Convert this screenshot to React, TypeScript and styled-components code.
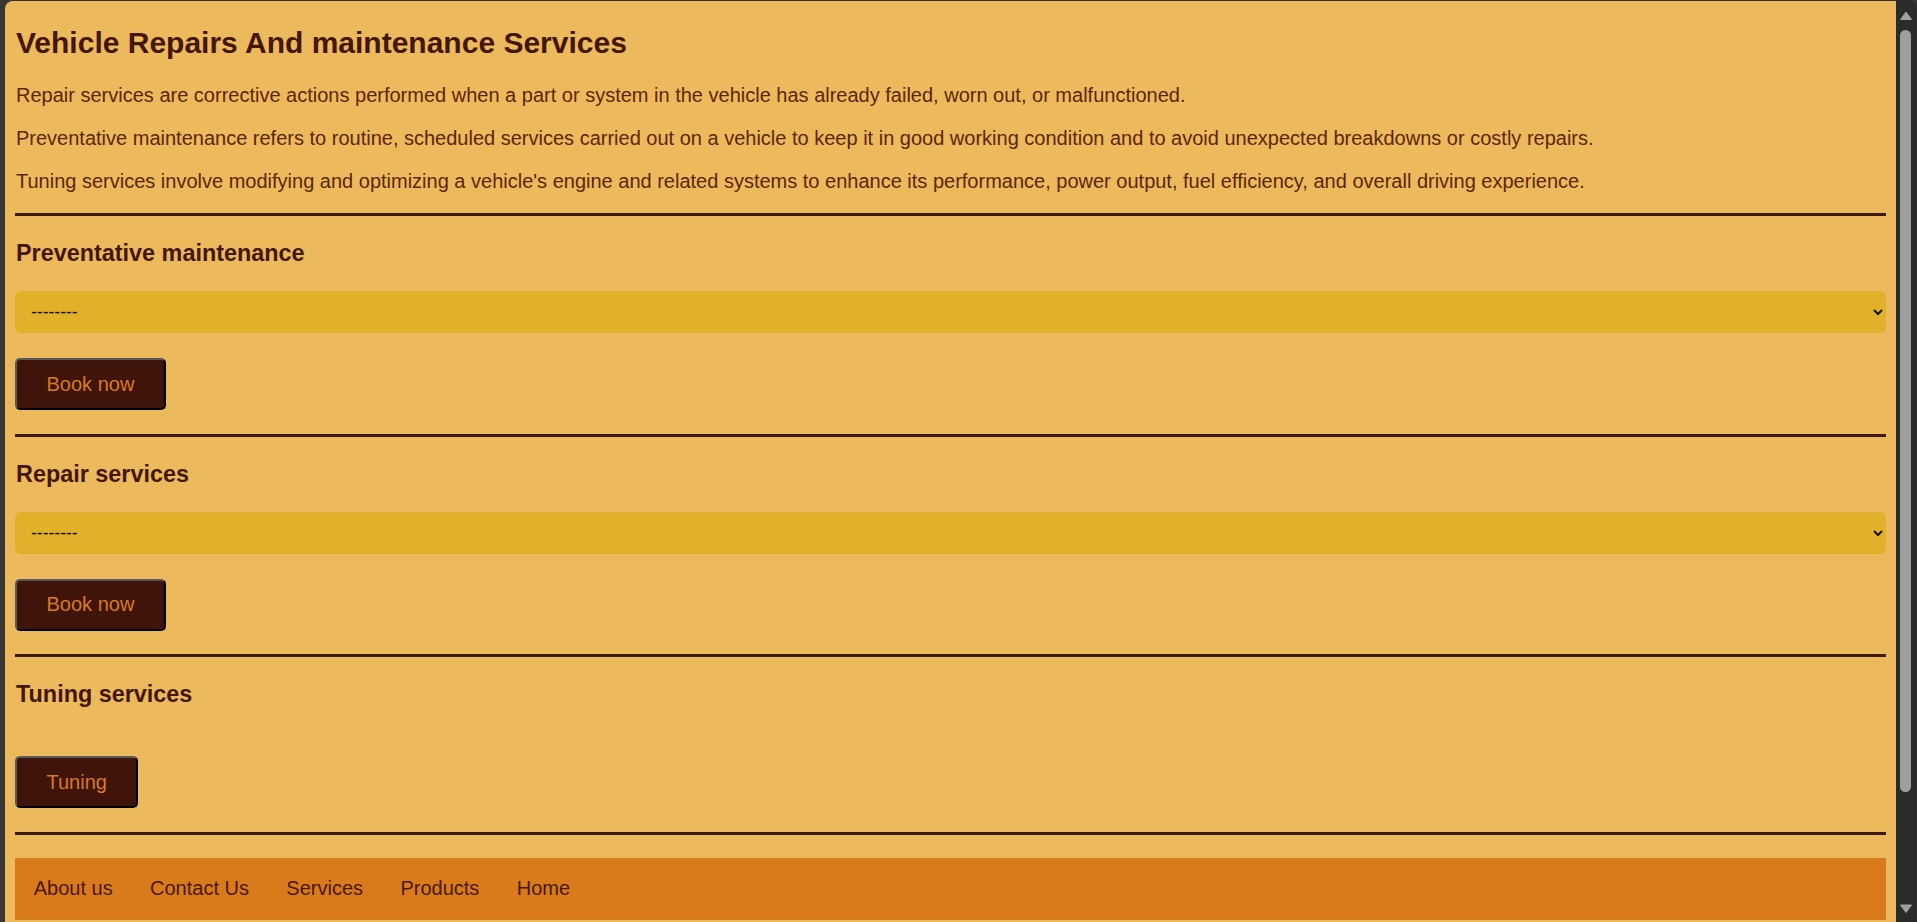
import * as React from 'react';
import styled, { createGlobalStyle } from 'styled-components';

const GlobalStyle = createGlobalStyle`
  html {
    background: #363636;
  }
  body {
    margin: 1px 21px 0 5px;
    font-family: "Liberation Sans", Arial, sans-serif;
  }
`;

const Page = styled.div`
  background: #ecb95c;
  border-radius: 8px 0 0 8px;
  padding: 10px 10px 150px;
  color: #4a1808;
`;

const Title = styled.h1`
  font-size: 30px;
  line-height: 34px;
  font-weight: bold;
  margin: 15px 0 24px 1px;
  color: #451606;
`;

const Intro = styled.p`
  font-size: 20px;
  line-height: 23px;
  margin: 0 0 20px 1px;
  color: #5e2608;
`;

const Divider = styled.hr`
  border: none;
  height: 3px;
  margin: 0;
  background: #3f1a0a;
`;

const Section = styled.section`
  display: flex;
  flex-direction: column;
  align-items: flex-start;
  gap: 25px;
  padding: 24px 0 23.5px;
`;

const SectionTitle = styled.h3`
  font-size: 23.4px;
  line-height: 26px;
  font-weight: bold;
  margin: 0 0 0 1px;
  color: #451606;
`;

const Select = styled.select`
  width: 100%;
  height: 42px;
  border: none;
  border-radius: 6px;
  background: #e3b02a;
  color: #111;
  font-family: "Liberation Sans", Arial, sans-serif;
  font-size: 17.5px;
  padding: 0 11px 0 12px;
  outline: none;
`;

const Button = styled.button<{ $offset?: number }>`
  height: 52px;
  margin-top: ${p => p.$offset ?? 0}px;
  padding: 0 29.5px;
  background: #40140a;
  color: #d97b1c;
  font-family: "Liberation Sans", Arial, sans-serif;
  font-size: 20px;
  border: 2px solid;
  border-color: #595959 #000 #000 #595959;
  border-radius: 5px;
  cursor: pointer;
`;

const Nav = styled.nav`
  display: flex;
  margin-top: 23.5px;
  padding: 19px 0 20px;
  background: #d97b1c;
`;

const NavLink = styled.a`
  font-size: 20px;
  line-height: 23px;
  padding: 0 18.7px;
  color: #4a1808;
  text-decoration: none;
`;

/* the window's own scroll bar, drawn since the capture hides it */
const ScrollBar = styled.div`
  position: fixed;
  top: 0;
  right: 0;
  width: 21px;
  height: 100vh;
  display: flex;
  flex-direction: column;
  background: #2b2b2b;
  border-top-right-radius: 8px;
`;

const ScrollArrow = styled.svg`
  display: block;
  flex: none;
  width: 21px;
  height: 27px;
`;

const ScrollTrack = styled.div`
  flex: 1;
  padding: 3px 6px 0 4px;
`;

const ScrollThumb = styled.div`
  height: 762px;
  border-radius: 6px;
  background: #9f9f9f;
`;

const services = {
  preventative: 'Preventative maintenance',
  repair: 'Repair services',
};

export default function App() {
  return (
    <>
      <GlobalStyle />
      <Page>
        <Title>Vehicle Repairs And maintenance Services</Title>
        <Intro>
          Repair services are corrective actions performed when a part or system in the vehicle has already failed, worn out, or malfunctioned.
        </Intro>
        <Intro>
          Preventative maintenance refers to routine, scheduled services carried out on a vehicle to keep it in good working condition and to avoid unexpected breakdowns or costly repairs.
        </Intro>
        <Intro>
          Tuning services involve modifying and optimizing a vehicle's engine and related systems to enhance its performance, power output, fuel efficiency, and overall driving experience.
        </Intro>
        <Divider />
        {Object.entries(services).map(([key, label]) => (
          <React.Fragment key={key}>
            <Section>
              <SectionTitle>{label}</SectionTitle>
              <Select defaultValue="">
                <option value="">--------</option>
              </Select>
              <Button>Book now</Button>
            </Section>
            <Divider />
          </React.Fragment>
        ))}
        <Section>
          <SectionTitle>Tuning services</SectionTitle>
          <Button $offset={24}>Tuning</Button>
        </Section>
        <Divider />
        <Nav>
          <NavLink href="#">About us</NavLink>
          <NavLink href="#">Contact Us</NavLink>
          <NavLink href="#">Services</NavLink>
          <NavLink href="#">Products</NavLink>
          <NavLink href="#">Home</NavLink>
        </Nav>
      </Page>
      <ScrollBar>
        <ScrollArrow viewBox="0 0 21 27">
          <path d="M4.5 19.5 L10 12 L15.5 19.5 Z" fill="#a0a0a0" stroke="#a0a0a0" strokeLinejoin="round" strokeWidth="1" />
        </ScrollArrow>
        <ScrollTrack>
          <ScrollThumb />
        </ScrollTrack>
        <ScrollArrow viewBox="0 0 21 27">
          <path d="M4.5 10 L10 17.5 L15.5 10 Z" fill="#a0a0a0" stroke="#a0a0a0" strokeLinejoin="round" strokeWidth="1" />
        </ScrollArrow>
      </ScrollBar>
    </>
  );
}
